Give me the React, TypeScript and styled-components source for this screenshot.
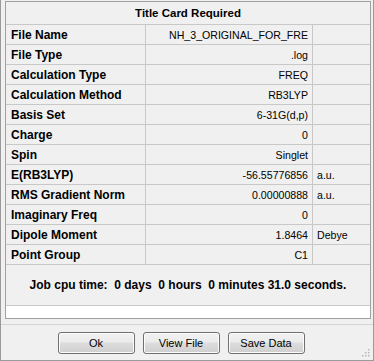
import React from "react";
import styled, { createGlobalStyle } from "styled-components";

const Global = createGlobalStyle`
  html, body { margin: 0; padding: 0; background: #f0f0f0; }
  * { box-sizing: border-box; }
`;

const Window = styled.div`
  width: 374px;
  height: 361px;
  background: #f0f0f0;
  border: 1px solid #9a9a9a;
  border-top: none;
  display: flex;
  flex-direction: column;
  padding: 1px 2px 0 4px;
  position: relative;
`;

const Panel = styled.div`
  border: 1px solid #a0a0a0;
  height: 318px;
  display: flex;
  flex-direction: column;
  background: #f0f0f0;
`;

const Header = styled.div`
  height: 23px;
  border-bottom: 1px solid #c8c8c8;
  display: flex;
  align-items: center;
  justify-content: center;
  font-family: "Liberation Sans", Arial, sans-serif;
  font-weight: bold;
  font-size: 11.5px;
  color: #000;
`;

const Row = styled.div`
  display: grid;
  grid-template-columns: 140px 167px 1fr;
  height: 20px;
  border-bottom: 1px solid #c8c8c8;
`;

const Label = styled.div`
  border-right: 1px solid #c8c8c8;
  padding-left: 5px;
  display: flex;
  align-items: center;
  font-family: "Liberation Sans", Arial, sans-serif;
  font-weight: bold;
  font-size: 12px;
  color: #000;
  white-space: nowrap;
`;

const Value = styled.div`
  border-right: 1px solid #c8c8c8;
  padding-right: 4px;
  display: flex;
  align-items: center;
  justify-content: flex-end;
  font-family: "Liberation Sans", Arial, sans-serif;
  font-size: 10.6px;
  color: #000;
  white-space: nowrap;
  overflow: hidden;
`;

const Unit = styled.div`
  padding-left: 4px;
  display: flex;
  align-items: center;
  font-family: "Liberation Sans", Arial, sans-serif;
  font-size: 10.6px;
  color: #000;
`;

const JobTime = styled.div`
  height: 41px;
  border-bottom: 1px solid #c8c8c8;
  display: flex;
  align-items: center;
  justify-content: center;
  font-family: "Liberation Sans", Arial, sans-serif;
  font-weight: bold;
  font-size: 12px;
  color: #000;
  white-space: pre;
`;

const BlankStrip = styled.div`
  flex: 1;
  background: #ffffff;
`;

const ButtonBar = styled.div`
  margin-top: 5px;
  margin-left: -4px;
  margin-right: -2px;
  border-top: 1px solid #d5d5d5;
  flex: 1;
  display: flex;
  justify-content: center;
  align-items: flex-start;
  gap: 8px;
  padding-top: 7px;
  padding-right: 12px;
`;

const Button = styled.button`
  width: 77px;
  height: 22px;
  border: 1px solid #707070;
  border-radius: 3px;
  background: linear-gradient(to bottom, #f2f2f2 0%, #ebebeb 45%, #dddddd 50%, #cfcfcf 100%);
  box-shadow: inset 0 0 0 1px #fcfcfc;
  font-family: "Liberation Sans", Arial, sans-serif;
  font-size: 11px;
  color: #000;
  padding: 0;
`;

const Grip = styled.svg`
  position: absolute;
  right: 2px;
  bottom: 2px;
`;

const rows: [string, string, string][] = [
  ["File Name", "NH_3_ORIGINAL_FOR_FRE", ""],
  ["File Type", ".log", ""],
  ["Calculation Type", "FREQ", ""],
  ["Calculation Method", "RB3LYP", ""],
  ["Basis Set", "6-31G(d,p)", ""],
  ["Charge", "0", ""],
  ["Spin", "Singlet", ""],
  ["E(RB3LYP)", "-56.55776856", "a.u."],
  ["RMS Gradient Norm", "0.00000888", "a.u."],
  ["Imaginary Freq", "0", ""],
  ["Dipole Moment", "1.8464", "Debye"],
  ["Point Group", "C1", ""],
];

export default function App() {
  return (
    <>
      <Global />
      <Window>
        <Panel>
          <Header>Title Card Required</Header>
          {rows.map(([l, v, u]) => (
            <Row key={l}>
              <Label>{l}</Label>
              <Value>{v}</Value>
              <Unit>{u}</Unit>
            </Row>
          ))}
          <JobTime>{"Job cpu time:  0 days  0 hours  0 minutes 31.0 seconds."}</JobTime>
          <BlankStrip />
        </Panel>
        <ButtonBar>
          <Button>Ok</Button>
          <Button>View File</Button>
          <Button>Save Data</Button>
        </ButtonBar>
        <Grip width="10" height="10" viewBox="0 0 10 10">
          {[
            [7, 1],
            [7, 4],
            [4, 4],
            [7, 7],
            [4, 7],
            [1, 7],
          ].map(([x, y]) => (
            <rect key={`${x}-${y}`} x={x} y={y} width="1.5" height="1.5" fill="#b8b8b8" />
          ))}
        </Grip>
      </Window>
    </>
  );
}
